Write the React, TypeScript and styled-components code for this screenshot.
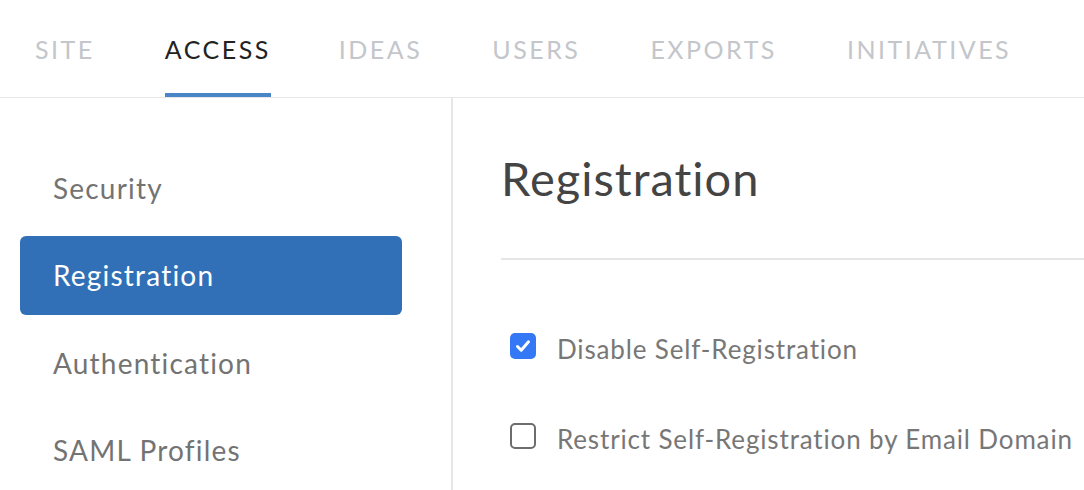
import React from "react"
import styled, { createGlobalStyle } from "styled-components"

const GlobalStyle = createGlobalStyle`
    html, body {
        margin: 0;
        padding: 0;
        background: #fff;
        font-family: Lato, "Open Sans", sans-serif;
    }
    * {
        box-sizing: border-box;
    }
`

const tabs = ["Site", "Access", "Ideas", "Users", "Exports", "Initiatives"]
const sections = ["Security", "Registration", "Authentication", "SAML Profiles"]

const options = [
    { label: "Disable Self-Registration", checked: true },
    { label: "Restrict Self-Registration by Email Domain", checked: false },
]

const Check = ({ checked }: { checked: boolean }) => (
    <Box checked={checked}>
        {checked && (
            <svg width="18" height="18" viewBox="0 0 18 18">
                <path d="M3.5 9.5 L7.2 13.2 L14.5 4.8" fill="none" stroke="#fff" strokeWidth="3" strokeLinecap="round" strokeLinejoin="round" />
            </svg>
        )}
    </Box>
)

export default function App() {
    return (
        <Page>
            <GlobalStyle />
            <TabBar>
                {tabs.map(t => <Tab key={t} active={t === "Access"}>{t}</Tab>)}
            </TabBar>
            <Body>
                <Sidebar>
                    {sections.map(s => <NavItem key={s} active={s === "Registration"}>{s}</NavItem>)}
                </Sidebar>
                <Main>
                    <Title>Registration</Title>
                    <Options>
                        {options.map(o => (
                            <Option key={o.label}>
                                <Check checked={o.checked} />
                                <span>{o.label}</span>
                            </Option>
                        ))}
                    </Options>
                </Main>
            </Body>
        </Page>
    )
}

const Page = styled.div`
    width: 1084px;
    height: 490px;
    overflow: hidden;
`

const TabBar = styled.div`
    display: flex;
    height: 98px;
    border-bottom: 1px solid #e6e6e6;
`

const Tab = styled.div<{ active?: boolean }>`
    display: flex;
    align-items: center;
    margin: 0 ${p => p.active ? '33px' : '35px'} 0 35px;
    padding-top: 4px;
    font-size: 25px;
    letter-spacing: 2.5px;
    text-transform: uppercase;
    color: ${p => p.active ? '#222' : '#c3c6ca'};
    border-bottom: 4px solid ${p => p.active ? '#4a86c7' : 'transparent'};
`

const Body = styled.div`
    display: flex;
    height: 392px;
`

const Sidebar = styled.div`
    width: 453px;
    flex-shrink: 0;
    border-right: 2px solid #e6e6e6;
    padding: 50px 49px 0 20px;
    display: flex;
    flex-direction: column;
    gap: 8px;
`

const NavItem = styled.div<{ active?: boolean }>`
    height: 80px;
    display: flex;
    align-items: center;
    padding-left: 33px;
    border-radius: 6px;
    font-size: 28px;
    letter-spacing: 1.2px;
    color: ${p => p.active ? '#fff' : '#737373'};
    background: ${p => p.active ? '#3170b7' : 'transparent'};
`

const Main = styled.div`
    flex: 1;
    padding-left: 48px;
`

const Title = styled.h1`
    margin: 0;
    height: 162px;
    padding-top: 52px;
    font-size: 47px;
    font-weight: 400;
    letter-spacing: 1px;
    color: #444;
    border-bottom: 2px solid #e6e6e6;
`

const Options = styled.div`
    display: flex;
    flex-direction: column;
    gap: 64px;
    padding: 76px 0 0 9px;
`

const Option = styled.label`
    display: flex;
    align-items: center;
    gap: 21px;
    font-size: 26px;
    letter-spacing: 0.85px;
    color: #777;
    white-space: nowrap;
    height: 26px;
`

const Box = styled.span<{ checked: boolean }>`
    width: 26px;
    height: 26px;
    margin-bottom: 7px;
    flex-shrink: 0;
    border-radius: 5px;
    display: flex;
    align-items: center;
    justify-content: center;
    background: ${p => p.checked ? '#3478f6' : '#fff'};
    border: ${p => p.checked ? 'none' : '2px solid #6d6d6d'};
`
